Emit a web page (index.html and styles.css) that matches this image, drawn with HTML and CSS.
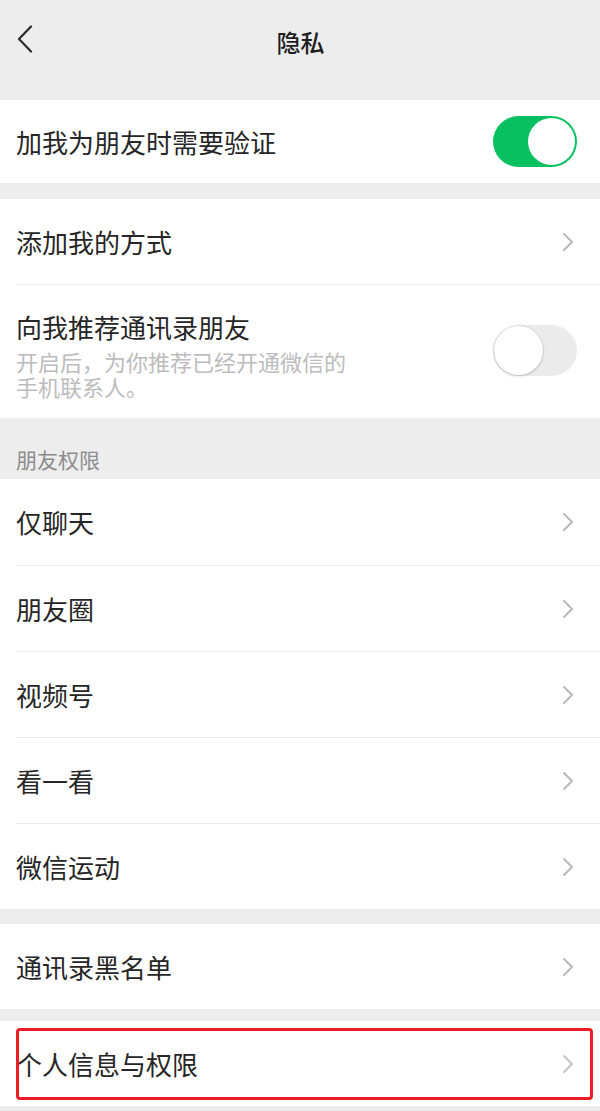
FILE: index.html
```html
<!DOCTYPE html>
<html lang="zh-CN">
<head>
<meta charset="utf-8">
<title>隐私</title>
<link rel="stylesheet" href="styles.css">
</head>
<body>
<div class="page">
  <header class="navbar">
    <span class="back">
      <svg width="16" height="28" viewBox="0 0 16 28"><polyline points="14,1.5 2,14 14,26.5" fill="none" stroke="#2b2b2b" stroke-width="2.2" stroke-linecap="round" stroke-linejoin="round"/></svg>
    </span>
    <h1 class="title">隐私</h1>
  </header>

  <section class="group g-first">
    <div class="row switch-row h83">
      <span class="label">加我为朋友时需要验证</span>
      <span class="toggle on"><span class="knob"></span></span>
    </div>
  </section>

  <section class="group g-16">
    <div class="row h85">
      <span class="label">添加我的方式</span>
      <svg class="chev" width="12" height="20" viewBox="0 0 12 20"><polyline points="2,2 10,10 2,18" fill="none" stroke="#b8b8b8" stroke-width="2" stroke-linejoin="round" stroke-linecap="round"/></svg>
    </div>
    <div class="row switch-row tall">
      <div class="text">
        <div class="label">向我推荐通讯录朋友</div>
        <div class="desc">开启后，为你推荐已经开通微信的手机联系人。</div>
      </div>
      <span class="toggle off"><span class="knob"></span></span>
    </div>
  </section>

  <div class="section-title">朋友权限</div>

  <section class="group">
    <div class="row h86">
      <span class="label">仅聊天</span>
      <svg class="chev" width="12" height="20" viewBox="0 0 12 20"><polyline points="2,2 10,10 2,18" fill="none" stroke="#b8b8b8" stroke-width="2" stroke-linejoin="round" stroke-linecap="round"/></svg>
    </div>
    <div class="row h86">
      <span class="label">朋友圈</span>
      <svg class="chev" width="12" height="20" viewBox="0 0 12 20"><polyline points="2,2 10,10 2,18" fill="none" stroke="#b8b8b8" stroke-width="2" stroke-linejoin="round" stroke-linecap="round"/></svg>
    </div>
    <div class="row h86">
      <span class="label">视频号</span>
      <svg class="chev" width="12" height="20" viewBox="0 0 12 20"><polyline points="2,2 10,10 2,18" fill="none" stroke="#b8b8b8" stroke-width="2" stroke-linejoin="round" stroke-linecap="round"/></svg>
    </div>
    <div class="row h86">
      <span class="label">看一看</span>
      <svg class="chev" width="12" height="20" viewBox="0 0 12 20"><polyline points="2,2 10,10 2,18" fill="none" stroke="#b8b8b8" stroke-width="2" stroke-linejoin="round" stroke-linecap="round"/></svg>
    </div>
    <div class="row h86">
      <span class="label">微信运动</span>
      <svg class="chev" width="12" height="20" viewBox="0 0 12 20"><polyline points="2,2 10,10 2,18" fill="none" stroke="#b8b8b8" stroke-width="2" stroke-linejoin="round" stroke-linecap="round"/></svg>
    </div>
  </section>

  <section class="group g-15">
    <div class="row h85">
      <span class="label">通讯录黑名单</span>
      <svg class="chev" width="12" height="20" viewBox="0 0 12 20"><polyline points="2,2 10,10 2,18" fill="none" stroke="#b8b8b8" stroke-width="2" stroke-linejoin="round" stroke-linecap="round"/></svg>
    </div>
  </section>

  <section class="group g-12">
    <div class="row h85 marked">
      <span class="label">个人信息与权限</span>
      <svg class="chev" width="12" height="20" viewBox="0 0 12 20"><polyline points="2,2 10,10 2,18" fill="none" stroke="#c4c4c4" stroke-width="2" stroke-linejoin="round" stroke-linecap="round"/></svg>
      <span class="highlight"></span>
    </div>
  </section>
</div>
</body>
</html>
```

FILE: styles.css
```css
* {
  box-sizing: border-box;
}

html, body {
  margin: 0;
  padding: 0;
  background: #ededed;
}

body {
  font-family: "Noto Sans CJK SC", "Noto Sans", sans-serif;
  color: #222;
}

.page {
  width: 600px;
  min-height: 1111px;
  background: #ededed;
}

.navbar {
  height: 84px;
  display: flex;
  align-items: center;
  justify-content: center;
  position: relative;
}

.back {
  position: absolute;
  left: 17px;
  top: 25px;
  width: 16px;
  height: 28px;
  display: flex;
}

.title {
  margin: 0;
  font-size: 24px;
  font-weight: 500;
  line-height: 34px;
  color: #1e1e1e;
  padding-left: 1px;
}

.group {
  background: #fff;
}

.g-first {
  margin-top: 16px;
}

.g-16 {
  margin-top: 16px;
}

.g-15 {
  margin-top: 15px;
}

.g-12 {
  margin-top: 12px;
}

.row {
  display: flex;
  align-items: center;
  justify-content: space-between;
  margin-left: 16px;
  padding-right: 26px;
  border-top: 1px solid #ebebeb;
}

.row:first-child {
  border-top: none;
}

.h83 { height: 83px; }
.h85 { height: 85px; }
.h86 { height: 86px; }

.switch-row {
  padding-right: 23px;
}

.tall {
  height: 134px;
  padding-top: 24px;
  padding-bottom: 19px;
  align-items: flex-start;
}

.tall .toggle {
  align-self: center;
  margin-top: -8px;
}

.label {
  font-size: 26px;
  line-height: 36px;
  color: #262626;
  white-space: nowrap;
}

.desc {
  margin-top: 4px;
  font-size: 22px;
  line-height: 25px;
  color: #bcbcbc;
  max-width: 336px;
}

.chev {
  display: block;
  flex: none;
}

.toggle {
  flex: none;
  width: 84px;
  height: 51px;
  border-radius: 26px;
  display: flex;
  align-items: center;
  padding: 2px;
}

.toggle.on {
  background: #07c160;
  justify-content: flex-end;
}

.toggle.off {
  background: #ebebeb;
  justify-content: flex-start;
  padding: 1px;
}

.knob {
  width: 47px;
  height: 47px;
  border-radius: 50%;
  background: #fff;
}

.toggle.off .knob {
  width: 49px;
  height: 49px;
  box-shadow: 0 1px 3px rgba(0, 0, 0, 0.18), 0 0 0 1px rgba(0, 0, 0, 0.05);
}

.section-title {
  height: 61px;
  display: flex;
  align-items: flex-end;
  padding-left: 16px;
  padding-bottom: 6px;
  font-size: 21px;
  line-height: 28px;
  color: #8c8c8c;
}

.marked {
  position: relative;
}

.highlight {
  position: absolute;
  left: 0;
  right: 7px;
  top: 7px;
  bottom: 6px;
  border: 3px solid #ee1c24;
  border-radius: 4px;
  pointer-events: none;
}
```
